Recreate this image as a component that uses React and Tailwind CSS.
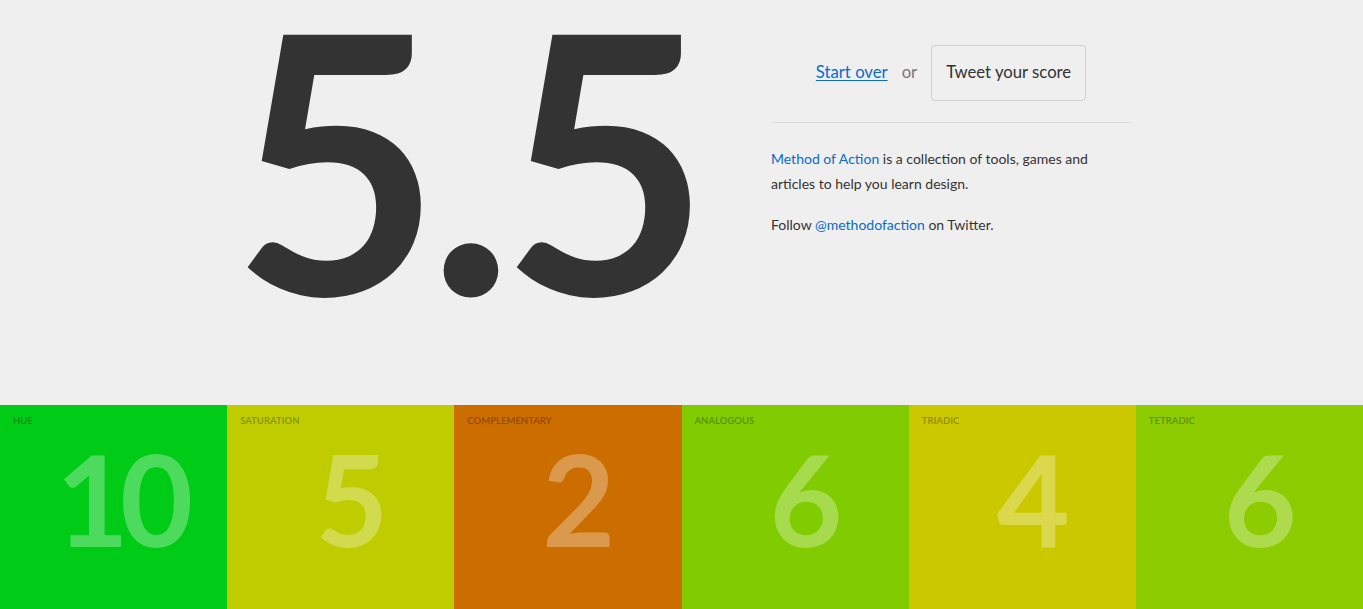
const SCORES = [
  { label: 'Hue', value: 10, bg: 'bg-[#00cc18]' },
  { label: 'Saturation', value: 5, bg: 'bg-[#bfcc00]' },
  { label: 'Complementary', value: 2, bg: 'bg-[#cc6d00]' },
  { label: 'Analogous', value: 6, bg: 'bg-[#80cc00]' },
  { label: 'Triadic', value: 4, bg: 'bg-[#ccc800]' },
  { label: 'Tetradic', value: 6, bg: 'bg-[#8ccc00]' },
]

function ScorePanel({ label, value, bg }) {
  return (
    <div className={`flex-1 h-[227px] ${bg} pt-[10px] px-[13px]`}>
      <div className="text-[9.5px] leading-[12px] font-bold uppercase text-black/30">{label}</div>
      <div className="mt-[9px] pl-[13px] text-center text-[126px] leading-none font-bold tracking-[-0.07em] text-white/30">
        {value}
      </div>
    </div>
  )
}

export default function App() {
  return (
    <div className="min-h-screen bg-[#efefef] text-[#333] font-['Lato','Noto_Sans',sans-serif]">
      {/* Result */}
      <div className="h-[405px] flex justify-center overflow-hidden">
        <div className="w-[464px] text-center">
          <div className="-mt-[24px] text-[360px] leading-none font-bold tracking-[-0.035em] text-[#333]">5.5</div>
        </div>
        <div className="w-[360px] ml-[75px] pt-[45px]">
          <div className="flex items-center justify-center text-[16.7px]">
            <a href="#" className="text-[#0b6bcb] underline underline-offset-2">Start over</a>
            <span className="mx-[14px] text-[#777]">or</span>
            <button className="h-[56px] px-[14px] border border-[#cfcfcf] rounded-[4px] bg-[#efefef] text-[#333]">
              Tweet your score
            </button>
          </div>
          <hr className="mt-[21px] border-t border-[#dcdcdc]" />
          <p className="mt-[23px] pr-[40px] text-[14px] leading-[25px]">
            <a href="#" className="text-[#0b6bcb]">Method of Action</a> is a collection of tools, games and articles to help you learn design.
          </p>
          <p className="mt-[16px] text-[14px] leading-[25px]">
            Follow <a href="#" className="text-[#0b6bcb]">@methodofaction</a> on Twitter.
          </p>
        </div>
      </div>

      {/* Breakdown */}
      <div className="flex">
        {SCORES.map((s) => (
          <ScorePanel key={s.label} {...s} />
        ))}
      </div>
    </div>
  )
}
